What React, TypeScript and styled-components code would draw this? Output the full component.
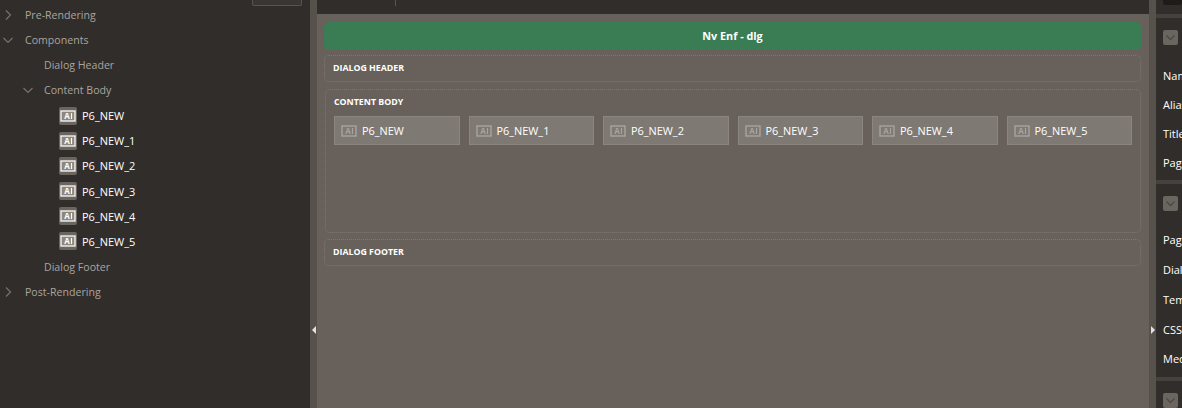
import styled, { createGlobalStyle } from 'styled-components';

const GlobalStyle = createGlobalStyle`
  html, body {
    margin: 0;
    padding: 0;
    background: #312d2a;
    overflow: hidden;
  }
  body {
    font-family: 'Open Sans', 'Liberation Sans', sans-serif;
  }
`;

const Page = styled.div`
  display: grid;
  grid-template-columns: 310px 7px 832px 7px 26px;
  width: 1182px;
  height: 408px;
  overflow: hidden;
`;

/* left tree */
const TreePanel = styled.div`
  background: #312d2a;
  overflow: hidden;
`;

const TreeTopBar = styled.div`
  display: flex;
  justify-content: flex-end;
  height: 2.2px;
  padding-right: 8px;
`;

const TreeTopButton = styled.div`
  flex: none;
  box-sizing: border-box;
  width: 50px;
  height: 6px;
  background: #3a3633;
  border: 1px solid #59534e;
  border-top: none;
  border-radius: 0 0 2px 2px;
`;

const TreeRow = styled.div<{ $indent: number }>`
  display: flex;
  align-items: center;
  height: 25.2px;
  padding-left: ${(p) => p.$indent}px;
`;

const Twisty = styled.svg<{ $gap: number }>`
  flex: none;
  width: 12px;
  height: 12px;
  margin-right: ${(p) => p.$gap}px;
  fill: none;
  stroke: #77716b;
  stroke-width: 1.2;
`;

const TreeLabel = styled.span`
  font-size: 10.6px;
  color: #aaa59f;
  white-space: nowrap;
`;

const ItemIconBox = styled.span`
  display: flex;
  align-items: center;
  justify-content: center;
  flex: none;
  width: 18px;
  height: 18px;
  margin-right: 5px;
  background: #6b6560;
  border-radius: 2px;
`;

const ItemLabel = styled.span`
  font-size: 11px;
  color: #fff;
  white-space: nowrap;
`;

/* splitters */
const Splitter = styled.div`
  display: flex;
  justify-content: center;
  padding-top: 326px;
  background: #57514b;
`;

const SplitHandle = styled.div<{ $dir: 'left' | 'right' }>`
  width: 0;
  height: 0;
  border-top: 4px solid transparent;
  border-bottom: 4px solid transparent;
  ${(p) =>
    p.$dir === 'left'
      ? 'border-right: 4px solid #e4e1de;'
      : 'border-left: 4px solid #e4e1de;'}
`;

/* centre grid layout */
const Main = styled.div`
  display: flex;
  flex-direction: column;
  background: #68615b;
  overflow: hidden;
`;

const MainTopBar = styled.div`
  flex: none;
  height: 14px;
  padding-left: 78px;
  background: #312d2a;
`;

const TopDivider = styled.div`
  width: 1px;
  height: 6px;
  background: #5a544f;
`;

const Canvas = styled.div`
  display: flex;
  flex-direction: column;
  padding: 8px 8px 0 7px;
`;

const TitleBar = styled.div`
  box-sizing: border-box;
  display: flex;
  align-items: center;
  justify-content: center;
  height: 28px;
  margin-bottom: 5px;
  padding-bottom: 2px;
  background: #3a7d54;
  border-radius: 5px;
  color: #fff;
  font-size: 10.8px;
  font-weight: 700;
`;

const Region = styled.div<{ $height: number; $gap: number; $inset?: number }>`
  box-sizing: border-box;
  height: ${(p) => p.$height}px;
  margin-bottom: ${(p) => p.$gap}px;
  margin-left: ${(p) => p.$inset ?? 0}px;
  padding: 6px 8px;
  border: 1px dotted #7d7771;
  border-bottom-style: solid;
  border-bottom-color: #736d67;
  border-radius: 5px;
`;

const RegionTitle = styled.div`
  font-size: 8.8px;
  line-height: 12px;
  font-weight: 700;
  color: #fff;
  text-transform: uppercase;
`;

const TileRow = styled.div`
  display: flex;
  gap: 9px;
  margin-top: 8px;
`;

const Tile = styled.div`
  box-sizing: border-box;
  display: flex;
  align-items: center;
  flex: 1 1 0;
  height: 29px;
  padding-left: 6px;
  background: #7f7973;
  border: 1px solid #8b857f;
`;

const TileLabel = styled.span`
  margin-left: 5px;
  font-size: 10.9px;
  color: #fff;
  white-space: nowrap;
`;

/* right property panel */
const PropsPanel = styled.div`
  display: flex;
  flex-direction: column;
  background: #312d2a;
  overflow: hidden;
`;

const PropsTop = styled.div`
  flex: none;
  height: 14px;
  padding-left: 7px;
`;

const PropsTopInput = styled.div`
  height: 5px;
  background: #1e1b19;
  border-radius: 0 0 2px 2px;
`;

const PropGroup = styled.div<{ $height: number }>`
  flex: none;
  box-sizing: border-box;
  height: ${(p) => p.$height}px;
  padding: 12px 0 0 7px;
  border-top: 4px solid #46413d;
`;

const CollapseButton = styled.div`
  display: flex;
  align-items: center;
  justify-content: center;
  width: 15px;
  height: 15px;
  background: #6b6560;
  border-radius: 2px;
`;

const CollapseIcon = styled.svg`
  width: 11px;
  height: 11px;
  fill: none;
  stroke: #4d4843;
  stroke-width: 1.3;
`;

const PropList = styled.div<{ $top: number }>`
  display: flex;
  flex-direction: column;
  margin-top: ${(p) => p.$top}px;
`;

const PropLabel = styled.div<{ $height: number }>`
  display: flex;
  align-items: center;
  height: ${(p) => p.$height}px;
  font-size: 11px;
  color: #fff;
  white-space: nowrap;
`;

const AiSvg = styled.svg`
  flex: none;
`;

const AiIcon = ({ muted }: { muted?: boolean }) => (
  <AiSvg width="16" height="12" viewBox="0 0 16 12">
    <rect
      x="1"
      y="1"
      width="14"
      height="10"
      fill={muted ? 'none' : '#8d8781'}
      stroke={muted ? '#a9a49e' : '#f2f0ee'}
      strokeWidth="1.4"
    />
    <text
      x="7"
      y="9"
      fontSize="8"
      fontWeight="700"
      fontFamily="'Open Sans', sans-serif"
      textAnchor="middle"
      fill={muted ? '#a9a49e' : '#fff'}
    >
      A
    </text>
    <line x1="11.5" y1="3" x2="11.5" y2="9" stroke={muted ? '#a9a49e' : '#fff'} strokeWidth="1.2" />
  </AiSvg>
);

const ChevronRight = () => (
  <Twisty $gap={11} viewBox="0 0 12 12">
    <path d="M4 1.5 L8.5 6 L4 10.5" />
  </Twisty>
);

const ChevronDown = ({ gap }: { gap: number }) => (
  <Twisty $gap={gap} viewBox="0 0 12 12">
    <path d="M1.5 4 L6 8.5 L10.5 4" />
  </Twisty>
);

const items = ['P6_NEW', 'P6_NEW_1', 'P6_NEW_2', 'P6_NEW_3', 'P6_NEW_4', 'P6_NEW_5'];

const Collapse = () => (
  <CollapseButton>
    <CollapseIcon viewBox="0 0 11 11">
      <path d="M1.5 3.5 L5.5 7.5 L9.5 3.5" />
    </CollapseIcon>
  </CollapseButton>
);

export default function App() {
  return (
    <>
      <GlobalStyle />
      <Page>
        <TreePanel>
          <TreeTopBar>
            <TreeTopButton />
          </TreeTopBar>
          <TreeRow $indent={2}>
            <ChevronRight />
            <TreeLabel>Pre-Rendering</TreeLabel>
          </TreeRow>
          <TreeRow $indent={2}>
            <ChevronDown gap={11} />
            <TreeLabel>Components</TreeLabel>
          </TreeRow>
          <TreeRow $indent={44}>
            <TreeLabel>Dialog Header</TreeLabel>
          </TreeRow>
          <TreeRow $indent={22}>
            <ChevronDown gap={10} />
            <TreeLabel>Content Body</TreeLabel>
          </TreeRow>
          {items.map((name) => (
            <TreeRow $indent={59} key={name}>
              <ItemIconBox>
                <AiIcon />
              </ItemIconBox>
              <ItemLabel>{name}</ItemLabel>
            </TreeRow>
          ))}
          <TreeRow $indent={44}>
            <TreeLabel>Dialog Footer</TreeLabel>
          </TreeRow>
          <TreeRow $indent={2}>
            <ChevronRight />
            <TreeLabel>Post-Rendering</TreeLabel>
          </TreeRow>
        </TreePanel>

        <Splitter>
          <SplitHandle $dir="left" />
        </Splitter>

        <Main>
          <MainTopBar>
            <TopDivider />
          </MainTopBar>
          <Canvas>
            <TitleBar>Nv Enf - dlg</TitleBar>
            <Region $height={27} $gap={7}>
              <RegionTitle>Dialog Header</RegionTitle>
            </Region>
            <Region $height={144} $gap={6} $inset={1}>
              <RegionTitle>Content Body</RegionTitle>
              <TileRow>
                {items.map((name) => (
                  <Tile key={name}>
                    <AiIcon muted />
                    <TileLabel>{name}</TileLabel>
                  </Tile>
                ))}
              </TileRow>
            </Region>
            <Region $height={27} $gap={0}>
              <RegionTitle>Dialog Footer</RegionTitle>
            </Region>
          </Canvas>
        </Main>

        <Splitter>
          <SplitHandle $dir="right" />
        </Splitter>

        <PropsPanel>
          <PropsTop>
            <PropsTopInput />
          </PropsTop>
          <PropGroup $height={166}>
            <Collapse />
            <PropList $top={16}>
              <PropLabel $height={29}>Name</PropLabel>
              <PropLabel $height={29}>Alias</PropLabel>
              <PropLabel $height={29}>Title</PropLabel>
              <PropLabel $height={28}>Page</PropLabel>
            </PropList>
          </PropGroup>
          <PropGroup $height={197}>
            <Collapse />
            <PropList $top={14}>
              <PropLabel $height={29.8}>Page</PropLabel>
              <PropLabel $height={29.8}>Dialog</PropLabel>
              <PropLabel $height={29.8}>Template</PropLabel>
              <PropLabel $height={29.8}>CSS</PropLabel>
              <PropLabel $height={28}>Media</PropLabel>
            </PropList>
          </PropGroup>
          <PropGroup $height={31}>
            <Collapse />
          </PropGroup>
        </PropsPanel>
      </Page>
    </>
  );
}
